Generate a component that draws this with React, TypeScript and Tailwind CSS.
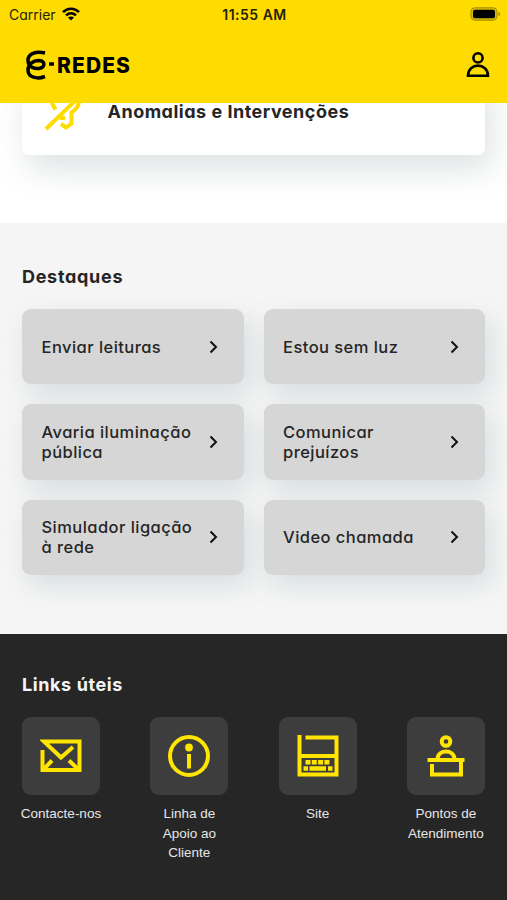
import type { ReactNode } from 'react';

const highlights = [
  'Enviar leituras',
  'Estou sem luz',
  'Avaria iluminação pública',
  'Comunicar prejuízos',
  'Simulador ligação à rede',
  'Video chamada',
];

interface UsefulLink {
  label: string;
  icon: ReactNode;
}

const iconClass = 'h-[42px] w-[42px] fill-none stroke-[#ffe500] stroke-[4]';

const usefulLinks: UsefulLink[] = [
  {
    label: 'Contacte-nos',
    icon: (
      <svg viewBox="0 0 42 42" className={iconClass}>
        <path d="M2.5 15V35H39.5V6.5H4L21 22.5L33 12" />
        <path d="M3 35L12 25.5M39 35L29 25.5" />
      </svg>
    ),
  },
  {
    label: 'Linha de Apoio ao Cliente',
    icon: (
      <svg viewBox="0 0 42 42" className={iconClass}>
        <circle cx="21" cy="21" r="19" />
        <circle cx="21" cy="12.5" r="3.9" className="fill-[#ffe500] stroke-none" />
        <path d="M21 19V33.5" />
      </svg>
    ),
  },
  {
    label: 'Site',
    icon: (
      <svg viewBox="0 0 42 42" className={iconClass}>
        <path d="M2.5 0V39.5H39.5V2.5H8.5M2.5 21H39.5" />
        <path d="M8.5 27.3H32.5" strokeDasharray="5 1.3" className="stroke-[4.6]" />
        <path d="M6.5 33.5H11M12.5 33.5H29M31 33.5H35.5" className="stroke-[4.6]" />
      </svg>
    ),
  },
  {
    label: 'Pontos de Atendimento',
    icon: (
      <svg viewBox="0 0 42 42" className={iconClass}>
        <circle cx="21" cy="6.5" r="4.3" />
        <path d="M12.5 24C13 14 29 14 29.5 24" />
        <path d="M2.5 25H39.5M7 29V39.5H36V25" />
      </svg>
    ),
  },
];

function StatusBar() {
  return (
    <div className="grid h-[28px] grid-cols-3 items-center pr-[6px] pl-[9px] font-['Inter',sans-serif] text-[14px] text-[#26220a]">
      <div className="flex items-center gap-[6px]">
        <span>Carrier</span>
        <svg viewBox="0 0 18 14" className="h-[14px] w-[18px] fill-none stroke-black stroke-[2.6]">
          <path d="M1 5.2C5.5 0.6 12.5 0.6 17 5.2M4 8.4C7 5.6 11 5.6 14 8.4" />
          <path d="M9 13.5L6 10.5C7.8 9 10.2 9 12 10.5Z" className="fill-black stroke-none" />
        </svg>
      </div>
      <span className="-ml-[1px] text-center font-semibold tracking-[0.5px]">11:55 AM</span>
      <svg viewBox="0 0 31 14" className="h-[14px] w-[31px] justify-self-end">
        <rect x="1" y="0.8" width="26" height="12.4" rx="3.8" className="fill-[#d8bb00] stroke-[#a08c00]" />
        <rect x="3" y="2.8" width="22" height="8.4" rx="2" className="fill-black" />
        <path d="M28.5 4.8C30.6 5.5 30.6 8.5 28.5 9.2Z" className="fill-[#a08c00]" />
      </svg>
    </div>
  );
}

function Header() {
  return (
    <header className="h-[103px] shrink-0 bg-[#ffdc00]">
      <StatusBar />
      <div className="flex h-[73px] items-center justify-between pr-[17px] pl-[25px]">
        <div className="flex items-center">
          <svg viewBox="0 0 32 30" className="h-[30px] w-[32px] fill-none stroke-black stroke-[3.5]">
            <path d="M20 3C11 0.500 2.500 4 3 11C3.500 17.500 10 19 14 18.500C20.500 17.500 20.500 11 14 10.500C8 10.500 3 14.500 3 20C3 27.500 12 29.500 20 26.500" />
            <path d="M24 14H29" />
          </svg>
          <span className="pt-px font-['Inter',sans-serif] text-[21px] leading-none font-extrabold tracking-[1.1px] text-black">
            REDES
          </span>
        </div>
        <svg viewBox="0 0 24 26" className="h-[26px] w-[24px] fill-none stroke-black stroke-[2.6]">
          <circle cx="12" cy="5.9" r="4.6" />
          <path d="M2 23.7C2 10.3 22 10.3 22 23.7Z" />
        </svg>
      </div>
    </header>
  );
}

function HighlightCard({ label }: { label: string }) {
  return (
    <button className="flex h-[75.3px] items-center justify-between rounded-[9px] bg-[#d6d6d6] pr-[26px] pl-[19.5px] text-left shadow-[6px_10px_26px_rgba(110,140,150,0.22)]">
      <span className="w-[156px] pt-[1.5px] text-[16.5px] leading-[19.5px] font-medium tracking-[0.45px]">{label}</span>
      <svg viewBox="0 0 9 14" className="h-[14px] w-[9px] fill-none stroke-[#111] stroke-2">
        <path d="M1.5 1.5L7 7L1.5 12.5" />
      </svg>
    </button>
  );
}

export default function App() {
  return (
    <div className="flex h-[900px] w-[507px] flex-col overflow-hidden bg-white font-['Inter',sans-serif] text-[#252525] [font-feature-settings:'cv11']">
      <Header />

      {/* Scrolled card, cut off by the header */}
      <section className="flex h-[120px] shrink-0 flex-col justify-end overflow-hidden px-[22px] pb-[68px]">
        <div className="flex h-[86px] shrink-0 items-center rounded-[7px] bg-white pl-[21px] shadow-[6px_14px_32px_rgba(90,110,115,0.2)]">
          <svg viewBox="0 0 40 40" className="h-[40px] w-[40px] fill-none stroke-[#ffdc00] stroke-[4]">
            <path d="M3 37L35 6" />
            <path d="M8.5 6L9.5 12L12.5 17.500M17 26H22" />
            <path d="M36 7C36.500 14 33.500 17.500 28.500 20.500V31.500L23 35.500L18 32" />
          </svg>
          <span className="mb-[2px] ml-[24.5px] text-[18px] font-bold tracking-[0.5px]">Anomalias e Intervenções</span>
        </div>
      </section>

      <section className="h-[410.5px] shrink-0 bg-[#f5f5f5] px-[22px] pt-[42px]">
        <h2 className="text-[18px] leading-[24px] font-bold tracking-[0.7px]">Destaques</h2>
        <div className="mt-[20px] grid grid-cols-2 gap-[20px]">
          {highlights.map((label) => (
            <HighlightCard key={label} label={label} />
          ))}
        </div>
      </section>

      <section className="flex-1 bg-[#262626] px-[22px] pt-[39.5px]">
        <h2 className="text-[18px] leading-[24px] font-bold tracking-[0.6px] text-[#f5f5f5]">Links úteis</h2>
        <div className="mt-[20px] flex justify-between">
          {usefulLinks.map((link) => (
            <a key={link.label} className="-mx-[4px] flex w-[86px] flex-col items-center">
              <div className="flex h-[78px] w-[78px] items-center justify-center rounded-[9px] bg-[#3d3d3d]">
                {link.icon}
              </div>
              <span className="mt-[9px] text-center font-['Liberation_Sans',sans-serif] text-[13.5px] leading-[19.5px] text-[#e6e6e6]">
                {link.label}
              </span>
            </a>
          ))}
        </div>
      </section>
    </div>
  );
}
